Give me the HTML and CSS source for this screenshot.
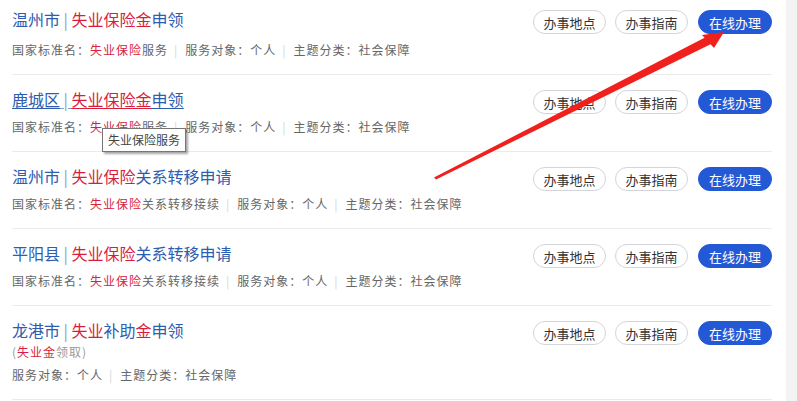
FILE: index.html
```html
<!DOCTYPE html>
<html lang="zh-CN">
<head>
<meta charset="utf-8">
<title>失业保险事项</title>
<link rel="stylesheet" href="styles.css">
</head>
<body>
<div class="page">
  <main class="main">
    <ul class="list">
      <li class="item">
        <div class="info">
          <a class="title" href="#"><span class="blue">温州市</span><span class="bar"> | </span><span class="red">失业保险金</span><span class="blue">申领</span></a>
          <p class="meta">国家标准名：<span class="red">失业保险</span>服务<span class="sep">|</span>服务对象：个人<span class="sep">|</span>主题分类：社会保障</p>
        </div>
        <div class="btns">
          <a class="btn" href="#">办事地点</a>
          <a class="btn" href="#">办事指南</a>
          <a class="btn primary" href="#">在线办理</a>
        </div>
      </li>
      <li class="item">
        <div class="info">
          <a class="title hover" href="#"><span class="blue">鹿城区</span><span class="bar"> | </span><span class="red">失业保险金</span><span class="blue">申领</span></a>
          <p class="meta">国家标准名：<span class="red">失业保险</span>服务<span class="sep">|</span>服务对象：个人<span class="sep">|</span>主题分类：社会保障</p>
        </div>
        <div class="btns">
          <a class="btn" href="#">办事地点</a>
          <a class="btn" href="#">办事指南</a>
          <a class="btn primary" href="#">在线办理</a>
        </div>
      </li>
      <li class="item">
        <div class="info">
          <a class="title" href="#"><span class="blue">温州市</span><span class="bar"> | </span><span class="red">失业保险</span><span class="blue">关系转移申请</span></a>
          <p class="meta">国家标准名：<span class="red">失业保险</span>关系转移接续<span class="sep">|</span>服务对象：个人<span class="sep">|</span>主题分类：社会保障</p>
        </div>
        <div class="btns">
          <a class="btn" href="#">办事地点</a>
          <a class="btn" href="#">办事指南</a>
          <a class="btn primary" href="#">在线办理</a>
        </div>
      </li>
      <li class="item">
        <div class="info">
          <a class="title" href="#"><span class="blue">平阳县</span><span class="bar"> | </span><span class="red">失业保险</span><span class="blue">关系转移申请</span></a>
          <p class="meta">国家标准名：<span class="red">失业保险</span>关系转移接续<span class="sep">|</span>服务对象：个人<span class="sep">|</span>主题分类：社会保障</p>
        </div>
        <div class="btns">
          <a class="btn" href="#">办事地点</a>
          <a class="btn" href="#">办事指南</a>
          <a class="btn primary" href="#">在线办理</a>
        </div>
      </li>
      <li class="item">
        <div class="info">
          <a class="title" href="#"><span class="blue">龙港市</span><span class="bar"> | </span><span class="red">失业</span><span class="blue">补助</span><span class="red">金</span><span class="blue">申领</span></a>
          <p class="sub">(<span class="red">失业金</span>领取)</p>
          <p class="meta meta-tight">服务对象：个人<span class="sep">|</span>主题分类：社会保障</p>
        </div>
        <div class="btns">
          <a class="btn" href="#">办事地点</a>
          <a class="btn" href="#">办事指南</a>
          <a class="btn primary" href="#">在线办理</a>
        </div>
      </li>
    </ul>
    <div class="tooltip">失业保险服务</div>
    <svg class="arrow" width="797" height="401" viewBox="0 0 797 401" aria-hidden="true">
      <polygon points="434,177.5 436,179.5 711,44 706,37" fill="#f0201c"/>
      <polygon points="724,32 702,35 714,48" fill="#f0201c"/>
    </svg>
  </main>
  <div class="rail"></div>
</div>
</body>
</html>
```

FILE: styles.css
```css
* {
  box-sizing: border-box;
}

html, body {
  margin: 0;
  padding: 0;
  background: #ffffff;
  font-family: "Noto Sans CJK SC", "Noto Sans", sans-serif;
  overflow: hidden;
}

.page {
  display: flex;
  width: 797px;
  height: 401px;
  overflow: hidden;
}

.main {
  position: relative;
  width: 786px;
  flex: none;
  padding: 0 14px 0 12px;
  background: #ffffff;
}

.rail {
  flex: 1;
  background: #f3f3f3;
}

.list {
  list-style: none;
  margin: 0;
  padding: 0;
}

.item {
  display: flex;
  justify-content: space-between;
  align-items: flex-start;
  padding: 12px 0 14px;
  border-bottom: 1px solid #ebebeb;
}

.item:first-child {
  padding-top: 7px;
}

.item:first-child .meta {
  margin-top: 9px;
}

.info {
  display: flex;
  flex-direction: column;
}

.title {
  font-size: 16px;
  line-height: 24px;
  text-decoration: none;
  color: #2d5db0;
  white-space: pre;
}

.title.hover,
.title.hover span {
  text-decoration: underline;
  text-underline-offset: 2px;
}

.blue {
  color: #2d5db0;
}

.red {
  color: #d81e3c;
}

.bar {
  color: #7f9fd6;
}

.meta {
  margin: 6px 0 0;
  font-size: 12px;
  line-height: 20px;
  letter-spacing: 1px;
  color: #666666;
}

.meta .red {
  color: #d5223e;
}

.item .meta-tight {
  margin-top: 3px;
}

.sep {
  color: #d2d6de;
  margin: 0 7px 0 6px;
}

.sub {
  margin: 0;
  font-size: 12px;
  line-height: 20px;
  letter-spacing: 1px;
  color: #9a9a9a;
}

.btns {
  display: flex;
  gap: 9px;
  margin-top: 3px;
}

.btn {
  display: flex;
  align-items: center;
  justify-content: center;
  width: 73px;
  height: 24px;
  border: 1px solid #d3d5da;
  border-radius: 12px;
  background: #ffffff;
  color: #333333;
  font-size: 13px;
  text-decoration: none;
}

.btn.primary {
  width: 74px;
  background: #2459d6;
  border-color: #2459d6;
  color: #ffffff;
  margin-left: 1px;
}

.tooltip {
  position: absolute;
  left: 102px;
  top: 128px;
  padding: 3px 5px;
  font-size: 12px;
  line-height: 16px;
  color: #444444;
  background: #ffffff;
  border: 1px solid #767676;
  box-shadow: 2px 2px 2px rgba(0, 0, 0, 0.35);
  white-space: nowrap;
}

.arrow {
  position: absolute;
  left: 0;
  top: 0;
  pointer-events: none;
}
```
